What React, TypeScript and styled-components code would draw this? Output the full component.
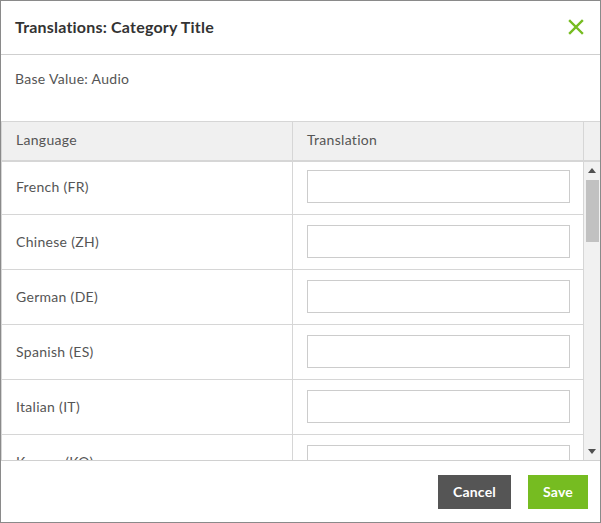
import React, { useRef, useState, useEffect } from "react";
import styled, { createGlobalStyle } from "styled-components";

const Global = createGlobalStyle`
  html, body { margin: 0; padding: 0; background: #ffffff; }
  * { box-sizing: border-box; }
  body { font-family: "Lato", "Open Sans", "Liberation Sans", sans-serif; }
`;

const Dialog = styled.div`
  width: 601px;
  height: 523px;
  border: 1px solid #8a8a8a;
  background: #fff;
  display: flex;
  flex-direction: column;
`;

const Header = styled.div`
  height: 54px;
  flex: none;
  border-bottom: 1px solid #cfcfcf;
  display: flex;
  align-items: center;
  justify-content: space-between;
  padding: 0 14px 2px 14px;
`;

const Title = styled.h1`
  margin: 0;
  font-size: 16px;
  font-weight: 700;
  color: #333333;
  letter-spacing: 0.2px;
`;

const CloseButton = styled.button`
  border: 0;
  background: none;
  padding: 0;
  width: 20px;
  height: 20px;
  display: flex;
  align-items: center;
  justify-content: center;
  cursor: pointer;
`;

const BaseValue = styled.div`
  height: 66px;
  flex: none;
  padding: 15px 14px 0;
  font-size: 14px;
  letter-spacing: 0.3px;
  color: #555555;
`;

const TableHead = styled.div`
  flex: none;
  height: 41px;
  display: grid;
  grid-template-columns: 291px 291px 1fr;
  background: #f0f0f0;
  border-top: 1px solid #d6d6d6;
  border-bottom: 2px solid #d6d6d6;
  border-left: 1px solid #d6d6d6;
`;

const HeadCell = styled.div<{ $last?: boolean }>`
  display: flex;
  align-items: center;
  padding: 0 0 4px 14px;
  font-size: 14px;
  letter-spacing: 0.3px;
  color: #555555;
  border-right: ${(p) => (p.$last ? "none" : "1px solid #d6d6d6")};
`;

const BodyWrap = styled.div`
  flex: none;
  height: 298px;
  display: flex;
  border-left: 1px solid #d6d6d6;
`;

const ScrollArea = styled.div`
  flex: 1;
  overflow-y: scroll;
  scrollbar-width: none;
  &::-webkit-scrollbar {
    display: none;
  }
`;

const Rail = styled.div`
  width: 16px;
  flex: none;
  background: #f1f1f1;
  display: flex;
  flex-direction: column;
`;

const RailButton = styled.button`
  height: 17px;
  flex: none;
  border: 0;
  padding: 0;
  background: #f1f1f1;
  display: flex;
  align-items: center;
  justify-content: center;
  cursor: default;
`;

const Track = styled.div`
  flex: 1;
  display: flex;
  flex-direction: column;
  padding: 1px 1px 0 2px;
`;

const Thumb = styled.div`
  flex: none;
  background: #c1c1c1;
`;

const Row = styled.div`
  display: grid;
  grid-template-columns: 291px 1fr;
  height: 55px;
  border-bottom: 1px solid #d6d6d6;
  &:first-child {
    height: 53px;
  }
  &:first-child > * {
    padding-bottom: 3px;
  }
`;

const LangCell = styled.div`
  display: flex;
  align-items: center;
  padding: 0 0 1px 14px;
  font-size: 14px;
  letter-spacing: 0.3px;
  color: #555555;
  border-right: 1px solid #d6d6d6;
`;

const InputCell = styled.div`
  display: flex;
  align-items: center;
  padding: 0 13px 1px 14px;
  border-right: 1px solid #d6d6d6;
`;

const TextInput = styled.input`
  width: 100%;
  height: 33px;
  border: 1px solid #cccccc;
  background: #fff;
  outline: none;
  font-size: 13px;
  padding: 0 8px;
  font-family: inherit;
`;

const Footer = styled.div`
  flex: 1;
  border-top: 1px solid #d0d0d0;
  display: flex;
  justify-content: flex-end;
  align-items: flex-start;
  gap: 17px;
  padding: 14px 12px 0 0;
`;

const Button = styled.button<{ $variant: "dark" | "green" }>`
  height: 34px;
  border: 0;
  padding: 0 15px 2px;
  background: ${(p) => (p.$variant === "dark" ? "#555555" : "#76bc21")};
  color: #ffffff;
  font-family: "Lato", "Liberation Sans", sans-serif;
  font-weight: 700;
  font-size: 14px;
  letter-spacing: 0.2px;
  cursor: pointer;
`;

const languages = [
  "French (FR)",
  "Chinese (ZH)",
  "German (DE)",
  "Spanish (ES)",
  "Italian (IT)",
  "Korean (KO)",
  "Japanese (JA)",
  "Portuguese (PT)",
  "Russian (RU)",
  "Dutch (NL)",
  "Arabic (AR)",
  "Swedish (SV)",
  "Polish (PL)",
  "Turkish (TR)",
  "Danish (DA)",
  "Finnish (FI)",
  "Norwegian (NO)",
  "Czech (CS)",
  "Greek (EL)",
  "Hebrew (HE)",
  "Hungarian (HU)",
  "Thai (TH)",
  "Vietnamese (VI)",
];

const TRACK = 264 - 1;

export default function App() {
  const ref = useRef<HTMLDivElement>(null);
  const [thumb, setThumb] = useState({ top: 0, height: 63 });

  const update = () => {
    const el = ref.current;
    if (!el) return;
    const ratio = el.clientHeight / el.scrollHeight;
    const h = Math.max(20, Math.round(TRACK * ratio));
    const max = el.scrollHeight - el.clientHeight;
    const top = max > 0 ? Math.round((el.scrollTop / max) * (TRACK - h)) : 0;
    setThumb({ top, height: h });
  };

  useEffect(update, []);

  const step = (d: number) => {
    if (ref.current) ref.current.scrollTop += d;
  };

  return (
    <>
      <Global />
      <Dialog>
        <Header>
          <Title>Translations: Category Title</Title>
          <CloseButton aria-label="Close">
            <svg width="16" height="16" viewBox="0 0 16 16">
              <path
                d="M2 2 L14 14 M14 2 L2 14"
                stroke="#76bc21"
                strokeWidth="2.4"
                strokeLinecap="square"
              />
            </svg>
          </CloseButton>
        </Header>
        <BaseValue>Base Value: Audio</BaseValue>
        <TableHead>
          <HeadCell>Language</HeadCell>
          <HeadCell>Translation</HeadCell>
          <HeadCell $last />
        </TableHead>
        <BodyWrap>
          <ScrollArea ref={ref} onScroll={update}>
            {languages.map((l) => (
              <Row key={l}>
                <LangCell>{l}</LangCell>
                <InputCell>
                  <TextInput type="text" />
                </InputCell>
              </Row>
            ))}
          </ScrollArea>
          <Rail>
            <RailButton aria-label="Scroll up" onClick={() => step(-40)}>
              <svg width="8" height="5" viewBox="0 0 8 5">
                <path d="M0 5 L4 0 L8 5 Z" fill="#505050" />
              </svg>
            </RailButton>
            <Track>
              <Thumb style={{ marginTop: thumb.top, height: thumb.height }} />
            </Track>
            <RailButton aria-label="Scroll down" onClick={() => step(40)}>
              <svg width="8" height="5" viewBox="0 0 8 5">
                <path d="M0 0 L8 0 L4 5 Z" fill="#505050" />
              </svg>
            </RailButton>
          </Rail>
        </BodyWrap>
        <Footer>
          <Button $variant="dark">Cancel</Button>
          <Button $variant="green">Save</Button>
        </Footer>
      </Dialog>
    </>
  );
}
